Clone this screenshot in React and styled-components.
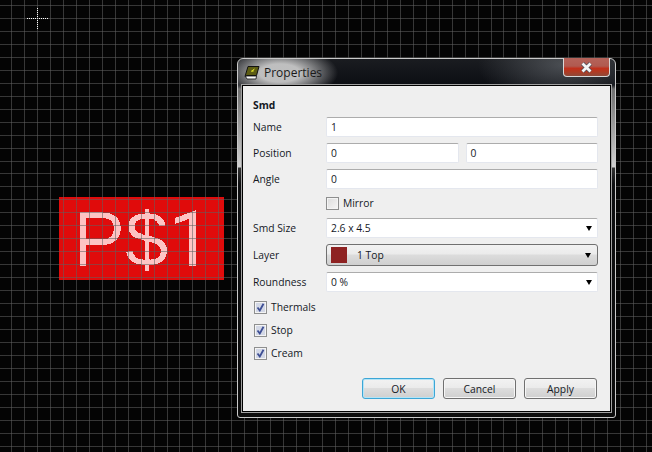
import React from 'react'
import styled, { createGlobalStyle } from 'styled-components'

const Global = createGlobalStyle`
  html, body {
    margin: 0;
    background: #000;
  }
`

const Canvas = styled.div`
  position: relative;
  width: 652px;
  height: 452px;
  overflow: hidden;
  background: #040404;
  font-family: "Open Sans", "Liberation Sans", sans-serif;
  font-size: 10.3px;
  color: #14181f;
`

const Grid = styled.div`
  position: absolute;
  inset: 0;
  background-image:
    repeating-linear-gradient(90deg, rgba(96, 96, 96, 0.55) -1.96px -0.96px, transparent -0.96px 11px),
    repeating-linear-gradient(180deg, rgba(96, 96, 96, 0.55) -7.96px -6.96px, transparent -6.96px 5px);
`

const Pad = styled.div`
  position: absolute;
  left: 59px;
  top: 197px;
  width: 165px;
  height: 83px;
  box-sizing: border-box;
  padding: 1px 0 0 14px;
  display: flex;
  align-items: center;
  background: #e00b0b;
  color: #fdc4c4;
  font-family: "Liberation Sans", sans-serif;
  font-size: 78px;
  line-height: 82px;
`

const PadName = styled.span`
  filter: url(#hard-edge);
`

// the 1 in Liberation Sans has a foot, the reference one does not
const PadDigit = styled.span`
  font-family: Roboto, sans-serif;
`

const Window = styled.div`
  position: absolute;
  left: 237px;
  top: 58px;
  width: 379px;
  height: 360px;
  box-sizing: border-box;
  display: flex;
  flex-direction: column;
  border: 1px solid #c9c9c9;
  border-radius: 6px 6px 3px 3px;
  padding: 0 4px 5px;
  background:
    radial-gradient(ellipse 58px 26px at 42px 14px, rgba(205, 205, 205, 0.92) 35%, rgba(205, 205, 205, 0)),
    radial-gradient(ellipse 85px 42px at 325px 6px, rgba(125, 130, 135, 0.5), rgba(125, 130, 135, 0)),
    linear-gradient(180deg, #1a1c20 0, #0c0e13 26px, #6e6e6e 30px, #d0d0d0 108px, #333 109px, #0e0f11 125px, #0c0c0c 100%);
`

const TitleBar = styled.div`
  height: 26px;
  flex: none;
  display: flex;
  align-items: center;
  gap: 4px;
  padding-left: 2px;
  font-size: 12px;
  color: #1a1a1a;
`

const CloseButton = styled.div`
  position: absolute;
  right: 5px;
  top: -1px;
  width: 47px;
  height: 19px;
  box-sizing: border-box;
  display: flex;
  align-items: center;
  justify-content: center;
  border: 1px solid #d8d8d8;
  border-top: 0;
  border-radius: 0 0 4px 4px;
  background: linear-gradient(180deg, #b5635a 0, #b05a50 45%, #c1301c 58%, #b23a22 75%, #8e4a3a 100%);
`

const Client = styled.div`
  flex: 1;
  box-sizing: border-box;
  border: 1px solid #000;
  outline: 1px solid #a0a0a0;
  background: #efefef;
  padding: 12px 12px 12px 10px;
  display: flex;
  flex-direction: column;
`

const Heading = styled.div`
  font-weight: 700;
  line-height: 15px;
  margin-bottom: 4px;
`

const Form = styled.div`
  display: grid;
  grid-template-columns: 73px 1fr;
  row-gap: 6px;
  align-items: center;
`

const Label = styled.div`
  line-height: 15px;
`

const Field = styled.div`
  height: 20px;
  box-sizing: border-box;
  display: flex;
  align-items: center;
  justify-content: space-between;
  padding: 0 5px 0 4px;
  background: #fff;
  border: 1px solid #e4e7ee;
  border-top-color: #acacac;
  border-radius: 2px;
  flex: 1;
  min-width: 0;
`

const Pair = styled.div`
  display: flex;
  gap: 7px;
`

const LayerSelect = styled.div`
  height: 22px;
  box-sizing: border-box;
  display: flex;
  align-items: center;
  padding: 0 6px 0 4px;
  border: 1px solid #707070;
  border-radius: 3px;
  background: linear-gradient(180deg, #f2f2f2 0, #ebebeb 45%, #dcdcdc 50%, #cfcfcf 100%);
`

const Swatch = styled.div`
  width: 16px;
  height: 16px;
  background: #8e2222;
  margin-right: 10px;
`

const LayerName = styled.span`
  flex: 1;
`

const Arrow = styled.span`
  width: 0;
  height: 0;
  border-left: 3.5px solid transparent;
  border-right: 3.5px solid transparent;
  border-top: 5px solid #000;
`

const CheckRow = styled.div`
  display: flex;
  align-items: center;
  gap: 4px;
  height: 15px;
  line-height: 15px;
`

const MirrorRow = styled(CheckRow)`
  grid-column: 2;
  margin: 1px 0 1px;
`

const Box = styled.div`
  width: 13px;
  height: 13px;
  flex: none;
  box-sizing: border-box;
  border: 1px solid #8e8f8f;
  background: ${({ $checked }) => ($checked ? '#d3d8e6' : 'linear-gradient(135deg, #dcdcdc, #f6f6f6)')};
  box-shadow: inset 0 0 0 1px #f4f4f4;
  display: flex;
  align-items: center;
  justify-content: center;
`

const Checks = styled.div`
  display: flex;
  flex-direction: column;
  gap: 8px;
  margin-top: 8px;
  padding-left: 1px;
`

const Buttons = styled.div`
  margin-top: auto;
  margin-right: 1px;
  display: flex;
  justify-content: flex-end;
  gap: 8px;
`

const Button = styled.div`
  width: 73px;
  height: 21px;
  box-sizing: border-box;
  display: flex;
  align-items: center;
  justify-content: center;
  border: 1px solid ${({ $primary }) => ($primary ? '#3ca6d6' : '#707070')};
  border-radius: 3px;
  box-shadow: inset 0 0 0 1px ${({ $primary }) => ($primary ? '#b4e4f6' : '#f6f6f6')};
  background: linear-gradient(180deg, #f2f2f2 0, #ebebeb 45%, #dddddd 50%, #cfcfcf 100%);
`

const HiddenDefs = styled.svg`
  position: absolute;
  width: 0;
  height: 0;
`

const CrossSvg = styled.svg`
  position: absolute;
  left: 27px;
  top: 8px;
`

const Tick = () => (
  <svg width="9" height="9" viewBox="0 0 9 9">
    <path d="M1.5 4.5 L3.8 7.5 L7.5 0.8" fill="none" stroke="#3e4f94" strokeWidth="1.8" />
  </svg>
)

const BookIcon = () => (
  <svg width="16" height="16" viewBox="0 0 16 16">
    <path d="M1 12.5 L4 2.5 H15 L12.5 11.5 H3 Z" fill="#5c5c14" stroke="#111" strokeWidth="1" />
    <path d="M1.5 12.5 L3 15 H12 L12.5 12 H3 Z" fill="#f6f6f6" stroke="#111" strokeWidth="0.8" />
    <path d="M7 7.5 L10.5 5 M8.5 8 L9.5 6.5" stroke="#e2e22a" strokeWidth="1" fill="none" />
  </svg>
)

const CloseIcon = () => (
  <svg width="13" height="11" viewBox="0 0 13 11">
    <path d="M2.5 1.5 L10.5 9.5 M10.5 1.5 L2.5 9.5" stroke="#4a4a55" strokeWidth="4.2" />
    <path d="M2.5 1.5 L10.5 9.5 M10.5 1.5 L2.5 9.5" stroke="#f4f4f4" strokeWidth="2.8" />
  </svg>
)

const CrossHair = () => (
  <CrossSvg width="21" height="21" viewBox="0 0 21 21">
    <path d="M0 10.5 H21 M10.5 0 V21" stroke="#fff" strokeWidth="1" strokeDasharray="1 1" />
  </CrossSvg>
)

const Check = ({ label }) => (
  <CheckRow>
    <Box $checked>
      <Tick />
    </Box>
    {label}
  </CheckRow>
)

export default function App() {
  return (
    <Canvas>
      <Global />
      <HiddenDefs aria-hidden="true">
        <filter id="hard-edge">
          <feComponentTransfer>
            <feFuncA type="discrete" tableValues="0 0 0 1" />
          </feComponentTransfer>
        </filter>
      </HiddenDefs>
      <Pad>
        <PadName>
          P$<PadDigit>1</PadDigit>
        </PadName>
      </Pad>
      <Grid />
      <CrossHair />
      <Window>
        <TitleBar>
          <BookIcon />
          Properties
        </TitleBar>
        <CloseButton>
          <CloseIcon />
        </CloseButton>
        <Client>
          <Heading>Smd</Heading>
          <Form>
            <Label>Name</Label>
            <Field>1</Field>
            <Label>Position</Label>
            <Pair>
              <Field>0</Field>
              <Field>0</Field>
            </Pair>
            <Label>Angle</Label>
            <Field>0</Field>
            <MirrorRow>
              <Box />
              Mirror
            </MirrorRow>
            <Label>Smd Size</Label>
            <Field>
              2.6 x 4.5
              <Arrow />
            </Field>
            <Label>Layer</Label>
            <LayerSelect>
              <Swatch />
              <LayerName>1 Top</LayerName>
              <Arrow />
            </LayerSelect>
            <Label>Roundness</Label>
            <Field>
              0 %
              <Arrow />
            </Field>
          </Form>
          <Checks>
            <Check label="Thermals" />
            <Check label="Stop" />
            <Check label="Cream" />
          </Checks>
          <Buttons>
            <Button $primary>OK</Button>
            <Button>Cancel</Button>
            <Button>Apply</Button>
          </Buttons>
        </Client>
      </Window>
    </Canvas>
  )
}
